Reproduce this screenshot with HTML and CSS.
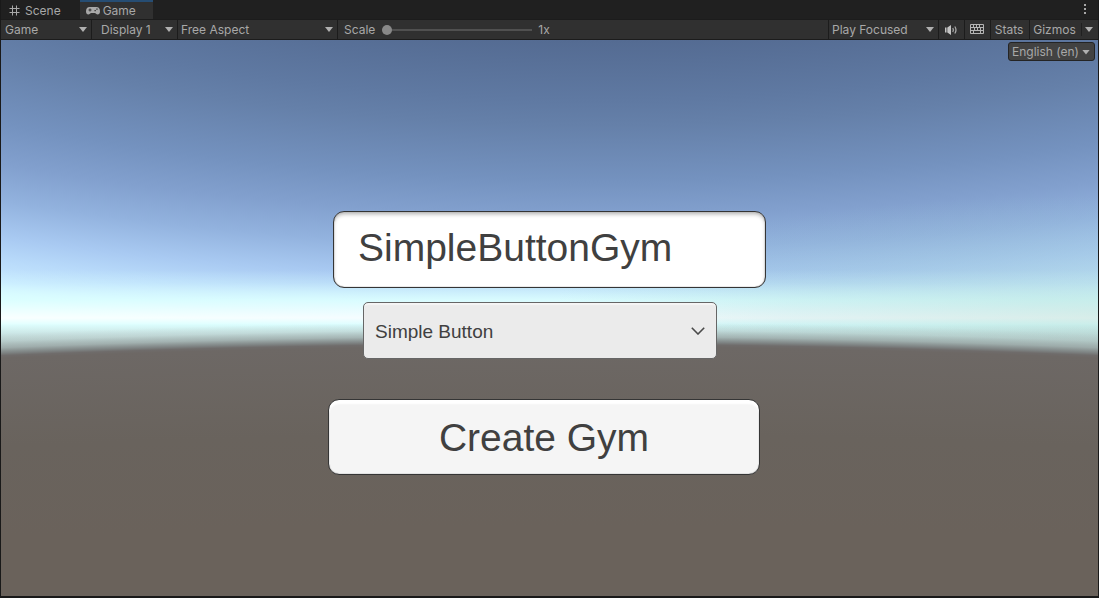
FILE: index.html
```html
<!DOCTYPE html>
<html lang="en">
<head>
<meta charset="utf-8">
<title>Game</title>
<link rel="stylesheet" href="styles.css">
</head>
<body>
<div class="editor">
  <header class="tabs">
    <button class="tab" type="button">
      <svg class="icon" width="12" height="12" viewBox="0 0 12 12" fill="none" stroke="currentColor"><path d="M3.5 .500v10M7.500 .500v10M.500 3.500h10M.500 7.500h10"/></svg>
      <span>Scene</span>
    </button>
    <button class="tab tab-active" type="button">
      <svg class="icon" width="14" height="10" viewBox="0 0 14 10"><path fill="currentColor" fill-rule="evenodd" d="M3.5 1C1.500 1 0 2.500 0 5.200C0 7.600 1 8.500 2.300 8.500C3.700 8.500 4.200 7 5.300 7H8.700C9.800 7 10.300 8.500 11.700 8.500C13 8.500 14 7.600 14 5.200C14 2.500 12.500 1 10.500 1ZM3.500 2.500H4.500V3.500H5.500V4.500H4.500V5.500H3.500V4.500H2.500V3.500H3.500ZM8.500 4H9.800V5.300H8.500ZM10.300 2.500H11.600V3.800H10.300Z"/></svg>
      <span>Game</span>
    </button>
    <button class="tab-menu" type="button" aria-label="Tab options">
      <svg class="icon" width="3" height="11" viewBox="0 0 3 11" fill="currentColor"><path d="M0 0h2v2H0zM0 4h2v2H0zM0 8h2v2H0z"/></svg>
    </button>
  </header>

  <div class="toolbar">
    <div class="picker picker-view"><select aria-label="View"><option>Game</option></select></div>
    <div class="picker picker-display"><select aria-label="Display"><option>Display 1</option></select></div>
    <div class="picker picker-aspect"><select aria-label="Aspect"><option>Free Aspect</option></select></div>
    <div class="scale">
      <label for="scale">Scale</label>
      <input id="scale" type="range" min="1" max="5" value="1">
      <output for="scale">1x</output>
    </div>
    <div class="picker picker-play"><select aria-label="Play mode"><option>Play Focused</option></select></div>
    <button class="tool" type="button" aria-label="Mute audio">
      <svg class="icon" width="14" height="12" viewBox="0 0 14 12"><path fill="#c4c4c4" d="M1 3.500H2.500V8.500H1ZM3.300 3.500L7 1V11L3.300 8.500Z"/><path fill="none" stroke="#b0b0b0" stroke-width="1.200" d="M8.800 4Q10 6 8.800 8M10.800 2.500Q13.200 6 10.800 9.500"/></svg>
    </button>
    <button class="tool" type="button" aria-label="Keyboard shortcuts">
      <svg class="icon" width="14" height="11" viewBox="0 0 14 11" fill="none" stroke="#b4b4b4"><path d="M.5.5H13.500V9.500H.5ZM.5 3.500H13.500M.5 6.500H13.500M3.500.5V3.500M6.500.5V3.500M9.500.5V3.500M4.500 3.500V6.500M7.500 3.500V6.500M10.500 3.500V6.500M3.500 6.500V9.500M10.500 6.500V9.500"/></svg>
    </button>
    <button class="tool tool-stats" type="button">Stats</button>
    <button class="tool tool-gizmos" type="button">Gizmos</button>
    <button class="tool tool-more" type="button" aria-label="Gizmo options"></button>
  </div>

  <main class="view">
    <div class="picker locale"><select aria-label="Language"><option>English (en)</option></select></div>
    <form class="form">
      <input class="name" type="text" aria-label="Gym name" value="SimpleButtonGym">
      <div class="kind">
        <select aria-label="Gym type"><option>Simple Button</option></select>
        <svg class="chevron" width="14" height="8" viewBox="0 0 14 8" fill="none" stroke="#4a4a4a" stroke-width="1.600"><path d="M.8.8L7 7L13.200.8"/></svg>
      </div>
      <button class="create" type="button">Create Gym</button>
    </form>
  </main>
</div>
</body>
</html>
```
FILE: styles.css
```css
* {
  box-sizing: border-box;
}

body {
  margin: 0;
  background: #191919;
  color: #a8a8a8;
  font: 12px/18px Inter, "Liberation Sans", sans-serif;
}

button,
select,
input {
  margin: 0;
  padding: 0;
  border: 0;
  border-radius: 0;
  background: none;
  color: inherit;
  font: inherit;
}

.icon {
  display: block;
  flex: none;
}

.editor {
  display: flex;
  flex-direction: column;
  min-height: 100vh;
  padding: 0 1px 2px;
}

.tabs {
  display: flex;
  height: 19px;
  background: #202020;
}

.tab {
  display: flex;
  align-items: center;
  gap: 4px;
  padding: 2px 17px 0 8px;
  border-top: 1px solid transparent;
}

.tab-active {
  gap: 3px;
  padding: 0 17px 0 6px;
  border-top: 2px solid #264d73;
  background: #303030;
  margin-left: 2px;
}

.tab-menu {
  display: flex;
  align-items: center;
  margin-left: auto;
  padding: 0 11px;
}

.toolbar {
  display: flex;
  height: 21px;
  border-top: 1px solid #1c1c1c;
  border-bottom: 1px solid #1c1c1c;
  background: #303030;
}

.picker {
  display: grid;
  align-items: center;
  border-right: 1px solid #1c1c1c;
}

.picker > select {
  grid-area: 1 / 1;
  width: 100%;
  height: 100%;
  padding-left: 4px;
  appearance: none;
}

.picker::after,
.tool-more::after {
  content: "";
  grid-area: 1 / 1;
  justify-self: end;
  width: 8px;
  height: 5px;
  margin-right: 4px;
  background: #b0b0b0;
  clip-path: polygon(0 0, 100% 0, 50% 100%);
  pointer-events: none;
}

.picker-view {
  width: 91px;
}

.picker-display {
  width: 86px;
}

.picker-display > select {
  padding-left: 9px;
}

.picker-aspect {
  width: 160px;
}

.picker-aspect > select {
  padding-left: 3px;
}

.scale {
  display: flex;
  flex: 1;
  align-items: center;
  gap: 6px;
  padding-left: 6px;
  border-right: 1px solid #1c1c1c;
}

.scale input {
  width: 150px;
  height: 10px;
  margin-left: 1px;
  appearance: none;
}

.scale input::-webkit-slider-runnable-track {
  height: 10px;
  background: linear-gradient(#505050, #505050) center / 100% 2px no-repeat;
}

.scale input::-webkit-slider-thumb {
  width: 10px;
  height: 10px;
  border-radius: 50%;
  background: #888888;
  appearance: none;
}

.picker-play {
  width: 110px;
}

.picker-play > select {
  padding-left: 3px;
}

.tool {
  display: grid;
  width: 26px;
  padding-right: 2px;
  place-items: center;
  border-right: 1px solid #1c1c1c;
}

.tool-stats {
  width: 39px;
}

.tool-gizmos {
  width: 51px;
  border-right: 0;
}

.tool-more {
  width: 17px;
  border-right: 0;
  background: linear-gradient(#202020, #202020) left center / 1px 13px no-repeat;
}

.tool-more::after {
  margin-right: 3px;
}

.view {
  position: relative;
  flex: 1;
  background:
    radial-gradient(circle 13000px at 50% 13304px,
      #6a625c 0, #6a625b 98.6%, #69635d 99.3%, #6d6865 99.98%, #6f6c6b 100%,
      rgba(122, 126, 126, .92) 100.02%, rgba(150, 161, 160, .65) 100.06%,
      rgba(175, 190, 188, .3) 100.11%, rgba(200, 215, 215, 0) 100.17%),
    linear-gradient(transparent 284px, rgba(150, 164, 162, .8) 312px),
    radial-gradient(ellipse 50% 120px at 100% 275px, rgba(160, 205, 195, .36), rgba(150, 200, 195, .2) 55%, transparent),
    linear-gradient(rgba(218, 255, 255, 0) 230px, rgba(218, 255, 255, .25) 243px,
      rgba(220, 255, 255, .9) 260px, rgba(250, 255, 255, .9) 278px, rgba(220, 255, 255, .9) 285px),
    radial-gradient(ellipse 3200px 1000px at 55% -200px,
      #546b92 20%, #5f79a2 26%, #6580a9 28.5%, #7492bf 34%, #82a0ce 37.5%,
      #92b2de 40.7%, #a9caf2 44%, #b8dafa 46%, #c6e8ff 48%, #dbffff 50%, #ffffff 52%);
}

.locale {
  position: absolute;
  top: 2px;
  right: 3px;
  width: 87px;
  height: 19px;
  border: 1px solid #242424;
  border-radius: 3px;
  background: #424242;
}

.locale > select {
  padding-left: 3px;
}

.form {
  display: flex;
  flex-direction: column;
  align-items: center;
  padding-top: 171px;
  color: #404040;
  font-family: "Liberation Sans", Arial, sans-serif;
}

.name {
  width: 433px;
  height: 77px;
  padding: 0 24px 4px;
  border: 1px solid #353535;
  border-radius: 11px;
  background: #ffffff;
  box-shadow: inset 0 3px 4px -1px #b0b0b0, inset 0 0 1px #353535;
  font-size: 39px;
}

.kind {
  display: grid;
  width: 354px;
  height: 57px;
  align-items: center;
  margin: 14px 19px 40px 0;
  border: 1px solid #666666;
  border-radius: 5px;
  background: #ebebeb;
  box-shadow: inset 0 2px 1px #f5f5f5;
}

.kind > select {
  grid-area: 1 / 1;
  height: 100%;
  padding: 2px 0 0 11px;
  appearance: none;
  font-size: 19px;
}

.chevron {
  grid-area: 1 / 1;
  justify-self: end;
  margin-right: 11px;
  pointer-events: none;
}

.create {
  width: 432px;
  height: 76px;
  margin-right: 11px;
  padding-top: 2px;
  border: 1px solid #353535;
  border-radius: 11px;
  background: #f5f5f5;
  box-shadow: inset 0 4px 2px #ffffff, inset 0 0 1px #353535;
  font-size: 39px;
}
```
